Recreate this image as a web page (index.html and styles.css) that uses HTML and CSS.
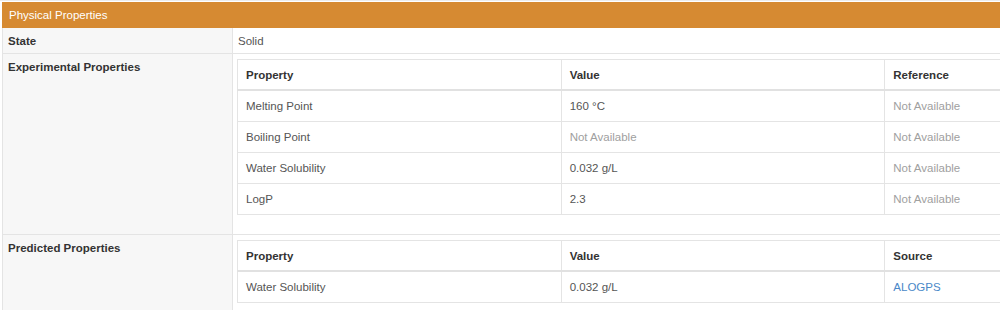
FILE: index.html
```html
<!DOCTYPE html>
<html>
<head>
<meta charset="utf-8">
<link rel="stylesheet" href="styles.css">
</head>
<body>
<div class="page">
  <table class="props">
    <thead>
      <tr><th colspan="2" class="section-head">Physical Properties</th></tr>
    </thead>
    <tbody>
      <tr>
        <th class="label">State</th>
        <td class="value simple">Solid</td>
      </tr>
      <tr>
        <th class="label">Experimental Properties</th>
        <td class="value">
          <table class="inner">
            <thead>
              <tr><th>Property</th><th>Value</th><th>Reference</th></tr>
            </thead>
            <tbody>
              <tr><td>Melting Point</td><td>160 °C</td><td class="na">Not Available</td></tr>
              <tr><td>Boiling Point</td><td class="na">Not Available</td><td class="na">Not Available</td></tr>
              <tr><td>Water Solubility</td><td>0.032 g/L</td><td class="na">Not Available</td></tr>
              <tr><td>LogP</td><td>2.3</td><td class="na">Not Available</td></tr>
            </tbody>
          </table>
        </td>
      </tr>
      <tr>
        <th class="label">Predicted Properties</th>
        <td class="value">
          <table class="inner">
            <thead>
              <tr><th>Property</th><th>Value</th><th>Source</th></tr>
            </thead>
            <tbody>
              <tr><td>Water Solubility</td><td>0.032 g/L</td><td><a class="link" href="#">ALOGPS</a></td></tr>
            </tbody>
          </table>
        </td>
      </tr>
    </tbody>
  </table>
</div>
</body>
</html>
```

FILE: styles.css
```css
html, body {
  margin: 0;
  padding: 0;
  background: #ffffff;
  overflow: hidden;
}
body {
  font-family: "Liberation Sans", Arial, sans-serif;
  font-size: 11.5px;
  color: #333333;
}
.page {
  padding: 1px 0 0 2px;
  width: 1300px;
  border-top: 1px solid #ececec;
}
.props {
  border-collapse: collapse;
  width: 1213px;
}
.section-head {
  background: #d68a32;
  color: #ffffff;
  font-weight: normal;
  text-align: left;
  padding: 0 6px;
  height: 24px;
  line-height: 24px;
  border: 1px solid #d68a32;
}
.label {
  width: 220px;
  background: #f7f7f7;
  text-align: left;
  vertical-align: top;
  font-weight: bold;
  color: #333333;
  padding: 6px 5px 5px 5px;
  line-height: 14px;
  border: 1px solid #e4e4e4;
}
.value {
  vertical-align: top;
  padding: 5px 5px 19px 4px;
  border: 1px solid #e4e4e4;
  color: #555555;
}
.value.simple {
  padding: 6px 4px 5px 5px;
  line-height: 14px;
  color: #555555;
}
.inner {
  border-collapse: collapse;
  width: 972px;
  table-layout: fixed;
}
.inner th,
.inner td {
  text-align: left;
  padding: 7px 8px;
  line-height: 16px;
  border: 1px solid #e4e4e4;
}
.inner th {
  font-weight: bold;
  color: #333333;
  padding: 7px 8px 6px 8px;
  border-bottom: 2px solid #e1e1e1;
}
.inner td {
  color: #555555;
}
.inner td.na {
  color: #a0a0a0;
}
.link {
  color: #4a88c8;
  text-decoration: none;
}
```
